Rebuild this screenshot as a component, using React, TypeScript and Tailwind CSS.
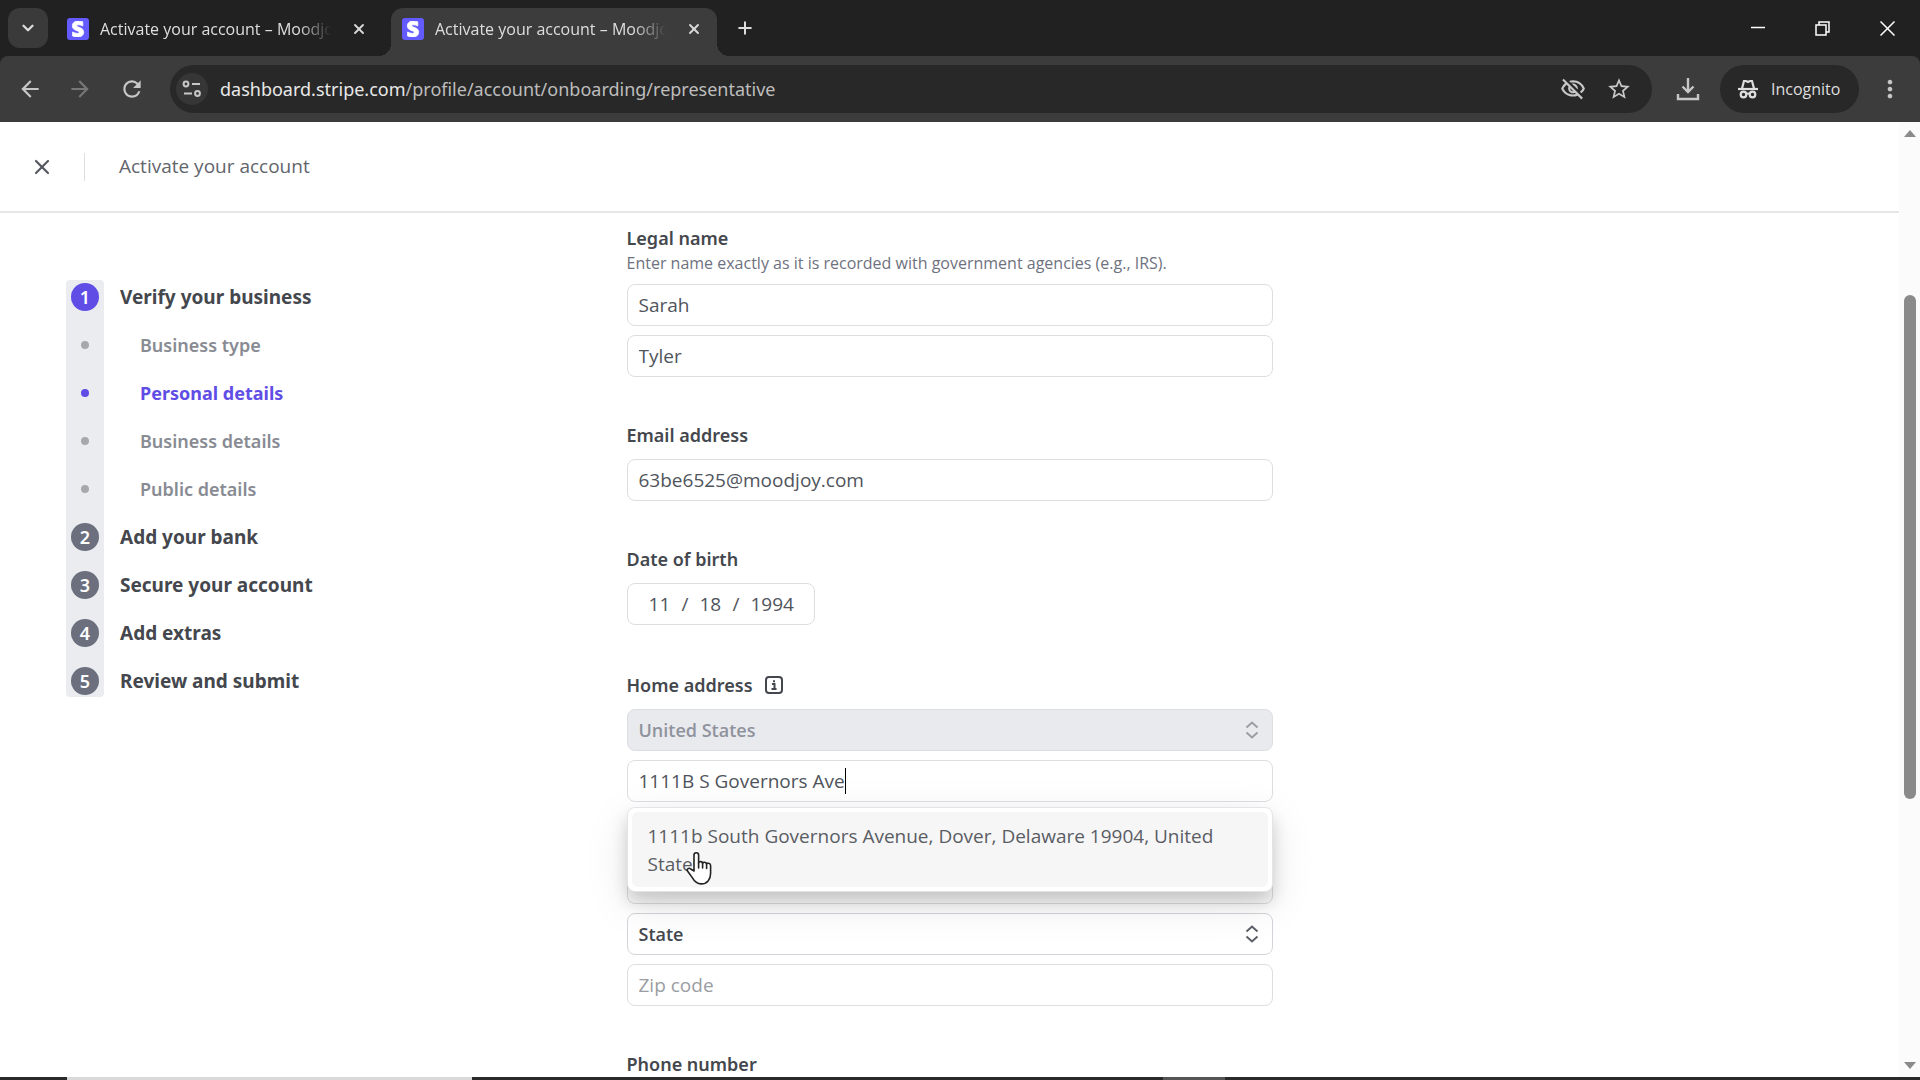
import React from 'react';
import { ChevronDown, X, Plus } from 'lucide-react';
import { FaStripeS } from 'react-icons/fa';
import { MdArrowBack, MdArrowForward, MdRefresh, MdOutlineVisibilityOff, MdStarBorder, MdMoreVert } from 'react-icons/md';

const fieldClass = 'block w-full h-[42px] rounded-lg border border-[#dcdee2] bg-white px-[11px] text-[19px] text-[#50545c] placeholder:text-[#9a9da3] outline-none';
const labelClass = "block font-['Noto_Sans',sans-serif] text-lg leading-6 font-semibold text-[#44474d]";

const steps = [
  { title: 'Verify your business', active: true, items: ['Business type', 'Personal details', 'Business details', 'Public details'] },
  { title: 'Add your bank', items: [] },
  { title: 'Secure your account', items: [] },
  { title: 'Add extras', items: [] },
  { title: 'Review and submit', items: [] },
];

function Tab({ active }: { active?: boolean }) {
  return (
    <div className={`relative flex h-12 w-[326px] items-center rounded-t-xl pl-[11px] pr-[11px] pb-[6px] ${active ? 'bg-[#3c3c3c]' : ''}`}>
      {active && (
        <>
          <span className="absolute -left-3 bottom-0 h-3 w-3 bg-[radial-gradient(circle_at_0_0,#212121_12px,#3c3c3c_12px)]" />
          <span className="absolute -right-3 bottom-0 h-3 w-3 bg-[radial-gradient(circle_at_100%_0,#212121_12px,#3c3c3c_12px)]" />
        </>
      )}
      <span className="flex h-[22px] w-[22px] shrink-0 items-center justify-center rounded-[3px] bg-[#635bff]">
        <FaStripeS className="h-4 w-4 stroke-white stroke-[24px] text-white" />
      </span>
      <span className="ml-[11px] flex-1 overflow-hidden whitespace-nowrap text-base text-[#dedede] [mask-image:linear-gradient(to_right,black_86%,transparent)]">
        Activate your account – Moodjoy
      </span>
      <button aria-label="Close tab" className="ml-4 flex h-6 w-6 items-center justify-center text-[#d8d8d8]">
        <X className="h-4 w-4" strokeWidth={2.8} />
      </button>
    </div>
  );
}

function TuneIcon() {
  return (
    <svg viewBox="0 0 20 20" className="h-5 w-5" fill="none" stroke="currentColor" strokeWidth="2">
      <circle cx="4" cy="5" r="2.4" />
      <path d="M10 5h8M2 14.500h8" />
      <circle cx="15.500" cy="14.500" r="2.400" />
    </svg>
  );
}

function DownloadIcon() {
  return (
    <svg viewBox="0 0 24 24" className="h-6 w-6" fill="none" stroke="currentColor" strokeWidth="2.400">
      <path d="M12 1v14M6.500 9.500L12 15l5.500-5.500M2 17v5h20v-5" />
    </svg>
  );
}

function IncognitoIcon() {
  return (
    <svg viewBox="0 0 22 20" className="h-5 w-[22px]" fill="none" stroke="currentColor" strokeWidth="2.200">
      <path d="M1 10h20" />
      <path d="M5 9.500L7 2h2l2 1 2-1h2l2 7.500" />
      <circle cx="6.500" cy="15.500" r="2.800" />
      <circle cx="15.500" cy="15.500" r="2.800" />
      <path d="M9 15q2-1 4 0" />
    </svg>
  );
}

function BrowserChrome() {
  return (
    <header className="shrink-0 bg-[#212121]">
      <div className="flex h-14 items-end">
        <button aria-label="Search tabs" className="ml-2 mb-2 flex h-10 w-10 items-center justify-center rounded-xl bg-[#3a3a3a] text-[#dedede]">
          <ChevronDown className="h-[18px] w-[18px]" strokeWidth={3} />
        </button>
        <div className="ml-2 flex gap-[9px]">
          <Tab />
          <Tab active />
        </div>
        <button aria-label="New tab" className="ml-4 mb-4 flex h-6 w-6 items-center justify-center text-[#dedede]">
          <Plus className="h-5 w-5" strokeWidth={2.4} />
        </button>
        <div className="ml-auto mb-3 flex text-white">
          <button aria-label="Minimize" className="flex h-8 w-[65px] items-center justify-center">
            <svg viewBox="0 0 14 14" className="h-[14px] w-[14px]" stroke="currentColor" strokeWidth="1.500"><path d="M0 6.500h14" /></svg>
          </button>
          <button aria-label="Restore" className="flex h-8 w-[65px] items-center justify-center">
            <svg viewBox="0 0 15 15" className="h-[15px] w-[15px]" fill="none" stroke="currentColor" strokeWidth="1.500"><path d="M1 4h10v10H1zM4 4V1h10v10h-3" /></svg>
          </button>
          <button aria-label="Close" className="flex h-8 w-[65px] items-center justify-center">
            <svg viewBox="0 0 15 15" className="h-[15px] w-[15px]" stroke="currentColor" strokeWidth="1.500"><path d="M.500.500l14 14M14.500.500l-14 14" /></svg>
          </button>
        </div>
      </div>

      <div className="flex h-[66px] items-center rounded-t-lg bg-[#3c3c3c] text-[#c7c7c7]">
        <button aria-label="Back" className="ml-[17px]"><MdArrowBack className="h-[26px] w-[26px]" /></button>
        <button aria-label="Forward" className="ml-6 text-[#777]"><MdArrowForward className="h-[26px] w-[26px]" /></button>
        <button aria-label="Reload" className="ml-[26px]"><MdRefresh className="h-[26px] w-[26px]" /></button>
        <div className="ml-[25px] flex h-12 min-w-0 flex-1 items-center rounded-full bg-[#282828] pl-[6px] pr-5">
          <button aria-label="View site information" className="flex h-8 w-8 items-center justify-center rounded-full bg-[#363636]"><TuneIcon /></button>
          <p className="ml-3 flex-1 truncate font-['Noto_Sans',sans-serif] text-lg text-[#bdbdbd]">
            <span className="text-[#e8e8e8]">dashboard.stripe.com</span>/profile/account/onboarding/representative
          </p>
          <button aria-label="Third-party cookies blocked"><MdOutlineVisibilityOff className="h-[26px] w-[26px]" /></button>
          <button aria-label="Bookmark this tab" className="ml-5"><MdStarBorder className="h-[26px] w-[26px]" /></button>
        </div>
        <button aria-label="Downloads" className="ml-6"><DownloadIcon /></button>
        <button className="ml-5 flex h-12 w-[139px] items-center rounded-full bg-[#282828] pl-[17px] text-base text-[#dedede]">
          <IncognitoIcon />
          <span className="ml-3">Incognito</span>
        </button>
        <button aria-label="Menu" className="ml-[17px] mr-4"><MdMoreVert className="h-7 w-7" /></button>
      </div>
    </header>
  );
}

function Sidebar() {
  return (
    <nav className="absolute left-[66px] top-[67px] w-[280px] font-['Noto_Sans',sans-serif]">
      <div className="absolute top-0 bottom-2 left-0 w-[38px] rounded bg-[#ebecf0]" />
      <ol className="relative -mt-[7px]">
        {steps.map((step, i) => (
          <li key={step.title}>
            <a href="#" className="flex h-12 items-center text-[19px] font-bold text-[#44474d]">
              <span className="flex w-[38px] justify-center">
                <span className={`flex h-7 w-7 items-center justify-center rounded-full text-lg font-semibold text-white ${step.active ? 'bg-[#5f4de6]' : 'bg-[#6b6f7e]'}`}>{i + 1}</span>
              </span>
              <span className="ml-4">{step.title}</span>
            </a>
            {step.items.map((item) => {
              const current = item === 'Personal details';
              return (
                <a key={item} href="#" className={`flex h-12 items-center text-lg ${current ? 'font-bold text-[#5f4de6]' : 'font-semibold text-[#888b93]'}`}>
                  <span className="flex w-[38px] justify-center">
                    <span className={`h-2 w-2 rounded-full ${current ? 'bg-[#5f4de6]' : 'bg-[#a6a8ae]'}`} />
                  </span>
                  <span className="ml-9">{item}</span>
                </a>
              );
            })}
          </li>
        ))}
      </ol>
    </nav>
  );
}

function UpDown({ className }: { className: string }) {
  return (
    <svg viewBox="0 0 14 18" className={`pointer-events-none absolute right-[14px] top-3 h-[18px] w-[14px] ${className}`} fill="none" stroke="currentColor" strokeWidth="2">
      <path d="M1.500 6.500L7 1.500l5.500 5M1.500 11.500l5.500 5 5.500-5" />
    </svg>
  );
}

function HandCursor() {
  return (
    <svg viewBox="0 0 26 34" className="pointer-events-none absolute left-[58px] top-[43px] h-[34px] w-[26px]" fill="#fff" stroke="#222" strokeWidth="1.600" strokeLinejoin="round" strokeLinecap="round">
      <path d="M8 20V4a2.300 2.300 0 0 1 4.600 0v8c0-2 4-1.800 4 .400 0-1.800 4-1.600 4 .800 0-1.600 4-1.400 4 1.200v8c0 6-3.500 10.500-9.500 10.500-5 0-7-3-9-6.500L1.500 20c-1-2 1.500-3.600 3.200-2z" />
      <path d="M12.600 12v5M16.600 12.500v4.500M20.600 13.500v4" />
    </svg>
  );
}

function DetailsForm() {
  return (
    <form className="mx-auto w-[646px]">
      <fieldset>
        <legend className={labelClass}>Legal name</legend>
        <p className="text-base leading-[26px] text-[#6e7280]">Enter name exactly as it is recorded with government agencies (e.g., IRS).</p>
        <div className="mt-2 flex flex-col gap-[9px]">
          <input aria-label="First name" defaultValue="Sarah" className={fieldClass} />
          <input aria-label="Last name" defaultValue="Tyler" className={fieldClass} />
        </div>
      </fieldset>

      <div className="mt-[46px]">
        <label htmlFor="email" className={labelClass}>Email address</label>
        <input id="email" type="email" defaultValue="63be6525@moodjoy.com" className={`mt-3 ${fieldClass}`} />
      </div>

      <fieldset className="mt-[46px]">
        <legend className={labelClass}>Date of birth</legend>
        <div className="mt-3 flex h-[42px] w-[188px] items-center justify-center gap-[11px] rounded-lg border border-[#dcdee2] pl-[2px] text-[19px] text-[#50545c]">
          <input aria-label="Month" defaultValue="11" className="w-[22px] outline-none" />
          <span>/</span>
          <input aria-label="Day" defaultValue="18" className="w-[22px] outline-none" />
          <span>/</span>
          <input aria-label="Year" defaultValue="1994" className="w-11 outline-none" />
        </div>
      </fieldset>

      <fieldset className="mt-12">
        <legend className={labelClass}>
          <span className="flex items-center">
            Home address
            <svg viewBox="0 0 18 18" className="ml-3 h-[18px] w-[18px]" fill="none" stroke="currentColor" strokeWidth="2">
              <rect x="1" y="1" width="16" height="16" rx="3" />
              <path d="M7 8h2.500v5M6.500 13h5M8 5.200h2" />
            </svg>
          </span>
        </legend>
        <div className="mt-3 flex flex-col gap-[9px]">
          <div className="relative">
            <select aria-label="Country" disabled className={`${fieldClass} appearance-none !bg-[#e9eaee] !text-lg font-semibold !text-[#8f939d] opacity-100`}>
              <option>United States</option>
            </select>
            <UpDown className="text-[#9a9da3]" />
          </div>
          <div className="relative">
            <input aria-label="Address line 1" defaultValue="1111B S Governors Ave" className={fieldClass} />
            <span className="absolute left-[218px] top-2 h-[26px] w-px bg-black" />
            <div className="absolute inset-x-0 top-[47px] z-10 h-[85px] rounded-lg border border-[#e3e4e7] bg-white p-1 shadow-[0_10px_16px_rgba(0,0,0,0.16),0_12px_44px_rgba(0,0,0,0.10)]">
              <button type="button" className="h-full w-full rounded-md bg-[#f6f6f7] px-4 text-left text-[19px] leading-7 text-[#5a5d64]">
                1111b South Governors Avenue, Dover, Delaware 19904, United States
              </button>
              <HandCursor />
            </div>
          </div>
          <input aria-label="Address line 2" className={fieldClass} />
          <input aria-label="City" className={fieldClass} />
          <div className="relative">
            <select aria-label="State" className={`${fieldClass} appearance-none !text-lg font-semibold !text-[#44474d] !border-[#d3d5da]`}>
              <option>State</option>
            </select>
            <UpDown className="text-[#5d6068]" />
          </div>
          <input aria-label="Zip code" placeholder="Zip code" className={fieldClass} />
        </div>
      </fieldset>

      <div className="mt-[46px]">
        <label htmlFor="phone" className={labelClass}>Phone number</label>
        <input id="phone" type="tel" className={`mt-3 ${fieldClass}`} />
      </div>
    </form>
  );
}

export default function App() {
  return (
    <div className="flex h-screen flex-col overflow-hidden bg-white font-['Open_Sans','Noto_Sans',sans-serif]">
      <BrowserChrome />
      <div className="flex min-h-0 flex-1">
        <div className="flex min-w-0 flex-1 flex-col">
          <div className="flex h-[91px] shrink-0 items-center border-b-2 border-[#e6e7e9]">
            <button aria-label="Close" className="ml-[30px] text-[#55585f]"><X className="h-6 w-6" strokeWidth={2.2} /></button>
            <span className="ml-[30px] h-7 w-px bg-[#dcdee2]" />
            <h1 className="ml-[34px] text-[19px] text-[#62656c]">Activate your account</h1>
          </div>
          <main className="relative min-h-0 flex-1 overflow-hidden pt-[13px]">
            <Sidebar />
            <DetailsForm />
          </main>
        </div>
        <div className="flex w-[21px] shrink-0 flex-col items-center bg-[#fbfbfb] py-2">
          <svg viewBox="0 0 12 7" className="h-[7px] w-3 fill-[#8a8a8a]"><path d="M6 0l6 7H0z" /></svg>
          <div className="mt-[158px] h-[504px] w-3 rounded-full bg-[#8a8a8a]" />
          <svg viewBox="0 0 12 7" className="mt-auto h-[7px] w-3 fill-[#8a8a8a]"><path d="M0 0h12L6 7z" /></svg>
        </div>
      </div>
      <footer className="flex h-[3px] shrink-0 bg-[#2a2a2a]">
        <div className="ml-[67px] w-[405px] bg-[#d9d9d9]" />
        <div className="ml-[691px] w-[62px] bg-[#555]" />
      </footer>
    </div>
  );
}
